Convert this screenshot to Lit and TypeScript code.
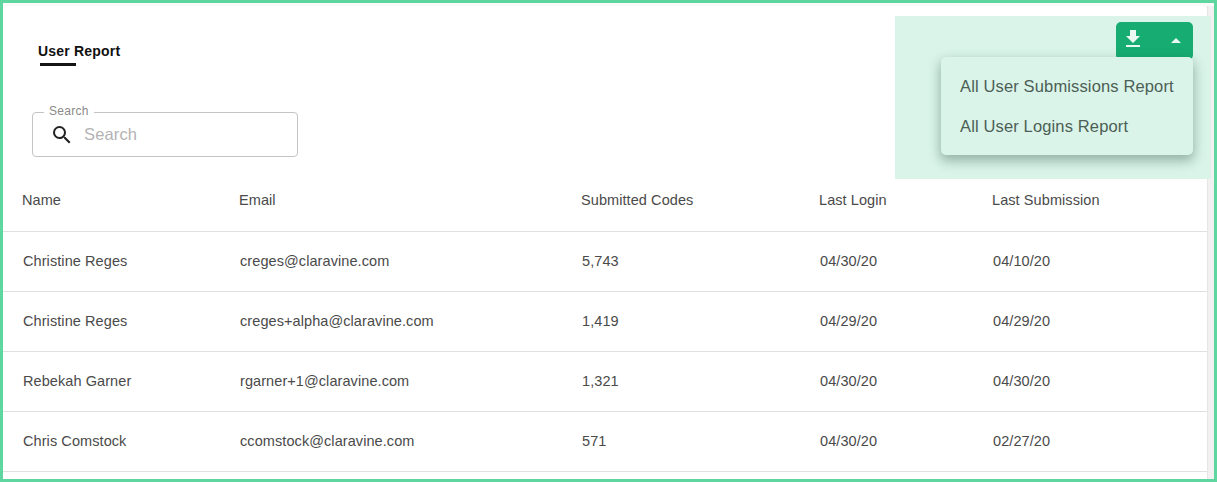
import { LitElement, html, css } from "lit";
import { customElement } from "lit/decorators.js";

const rows = [
  ["Christine Reges", "creges@claravine.com", "5,743", "04/30/20", "04/10/20"],
  ["Christine Reges", "creges+alpha@claravine.com", "1,419", "04/29/20", "04/29/20"],
  ["Rebekah Garner", "rgarner+1@claravine.com", "1,321", "04/30/20", "04/30/20"],
  ["Chris Comstock", "ccomstock@claravine.com", "571", "04/30/20", "02/27/20"],
];
const head = ["Name", "Email", "Submitted Codes", "Last Login", "Last Submission"];

@customElement("app-root")
export class AppRoot extends LitElement {
  static styles = css`
    :host { display: block; width: 1217px; height: 482px; font-family: "Liberation Sans", Arial, sans-serif; }
    * { box-sizing: border-box; }
    .frame { position: relative; width: 1217px; height: 482px; border: 3px solid #5fd6a0; background: #fafafa; overflow: hidden; display: flex; }
    .gutter { width: 7px; background: #f1f1f1; border-left: 1px solid #e6e6e6; margin-top: 3px; }
    .card { width: 1204px; margin-top: 3px; background: #fff; border-radius: 6px 6px 0 0; display: flex; flex-direction: column; }
    .top { height: 166px; padding: 36px 0 0 29px; flex: none; }
    .title { display: inline-block; font-weight: 700; font-size: 14px; line-height: 16px; letter-spacing: 0.2px; color: #111; padding-left: 6px; }
    .bar { width: 36px; height: 3px; background: #151515; margin: 3px 0 0 8px; }
    .search { position: relative; width: 266px; height: 45px; margin-top: 46px; border: 1px solid #c4c4c4; border-radius: 4px; display: flex; align-items: center; padding-left: 17px; }
    .search label { position: absolute; left: 11px; top: -9px; padding: 0 5px; background: #fff; font-size: 12px; line-height: 14px; letter-spacing: 0.3px; color: #8a8a8a; }
    .search svg { width: 24px; height: 24px; fill: #222; flex: none; margin-top: 0; }
    .search span { margin-left: 10px; font-size: 16.5px; letter-spacing: 0.14px; color: #b3b3b3; }
    .row { display: grid; grid-template-columns: 217px 342px 238px 173px 1fr; height: 60px; align-items: center; border-bottom: 1px solid #e0e0e0; padding: 0 0 2px 20px; font-size: 14.5px; letter-spacing: 0.08px; color: #4a4a4a; }
    .row.h { padding: 0 0 4px 19px; }
    .hl { position: absolute; left: 892px; top: 13px; width: 316px; height: 163px; background: #daf4e9; }
    .btn { position: absolute; left: 1113px; top: 19px; width: 77px; height: 38px; background: #17ad72; border-radius: 5px; }
    .btn svg { position: absolute; fill: #eafaf3; }
    .menu { position: absolute; left: 938px; top: 54px; width: 252px; height: 98px; padding-top: 9px; background: #daf4e9; border-radius: 5px; box-shadow: 0 5px 12px 1px rgba(40, 70, 55, 0.38); }
    .menu div { height: 40px; line-height: 40px; padding-left: 19px; font-size: 16.5px; letter-spacing: 0.14px; color: #4c5e55; white-space: nowrap; }
  `;
  render() {
    return html`<div class="frame">
      <div class="card">
        <div class="top">
          <div class="title">User Report</div>
          <div class="bar"></div>
          <div class="search">
            <label>Search</label>
            <svg viewBox="0 0 24 24"><path d="M15.5 14h-.79l-.28-.27A6.47 6.47 0 0 0 16 9.5 6.5 6.5 0 1 0 9.5 16c1.61 0 3.09-.59 4.23-1.57l.27.28v.79l5 4.99L20.49 19l-4.99-5zm-6 0C7.01 14 5 11.99 5 9.5S7.01 5 9.5 5 14 7.01 14 9.5 11.99 14 9.5 14z"/></svg>
            <span>Search</span>
          </div>
        </div>
        <div class="row h">${head.map((c) => html`<div>${c}</div>`)}</div>
        ${rows.map((r) => html`<div class="row">${r.map((c) => html`<div>${c}</div>`)}</div>`)}
      </div>
      <div class="gutter"></div>
      <div class="hl"></div>
      <div class="btn">
        <svg style="left:5px;top:5px" width="24" height="24" viewBox="0 0 24 24"><path d="M19 9h-4V3H9v6H5l7 7 7-7zM5 18v2h14v-2H5z"/></svg>
        <svg style="left:48px;top:7px" width="24" height="24" viewBox="0 0 24 24"><path d="M7 14l5-5 5 5z"/></svg>
      </div>
      <div class="menu"><div>All User Submissions Report</div><div>All User Logins Report</div></div>
    </div>`;
  }
}
